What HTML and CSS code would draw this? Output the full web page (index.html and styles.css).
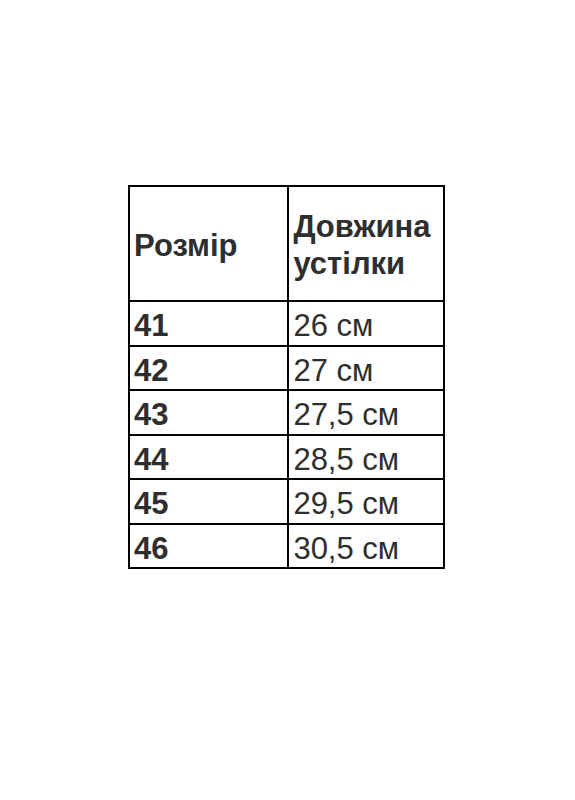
FILE: index.html
```html
<!DOCTYPE html>
<html lang="uk">
<head>
<meta charset="utf-8">
<title>Розмір</title>
<link rel="stylesheet" href="styles.css">
</head>
<body>
<div class="page">
  <table class="sizes">
    <colgroup><col class="c1"><col class="c2"></colgroup>
    <thead>
      <tr><th>Розмір</th><th>Довжина<br>устілки</th></tr>
    </thead>
    <tbody>
      <tr><td class="num">41</td><td>26 см</td></tr>
      <tr><td class="num">42</td><td>27 см</td></tr>
      <tr><td class="num">43</td><td>27,5 см</td></tr>
      <tr><td class="num">44</td><td>28,5 см</td></tr>
      <tr><td class="num">45</td><td>29,5 см</td></tr>
      <tr><td class="num">46</td><td>30,5 см</td></tr>
    </tbody>
  </table>
</div>
</body>
</html>
```
FILE: styles.css
```css
html, body {
  margin: 0;
  padding: 0;
  background: #ffffff;
}
.page {
  padding: 185px 0 0 128px;
}
.sizes {
  border-collapse: collapse;
  width: 317px;
  font-family: "Liberation Sans", Arial, sans-serif;
  font-size: 31px;
  color: #2e2e2e;
}
.c1 { width: 161px; }
.c2 { width: 156px; }
.sizes th, .sizes td {
  border: 2px solid #000;
  text-align: left;
  padding: 0 0 0 4px;
}
.sizes th {
  font-weight: bold;
  height: 110px;
  line-height: 37px;
  padding-top: 3px;
  vertical-align: middle;
}
.sizes td {
  height: 37.5px;
  line-height: 37.5px;
  padding-top: 5px;
  vertical-align: top;
}
.sizes td.num {
  font-weight: bold;
}
```
